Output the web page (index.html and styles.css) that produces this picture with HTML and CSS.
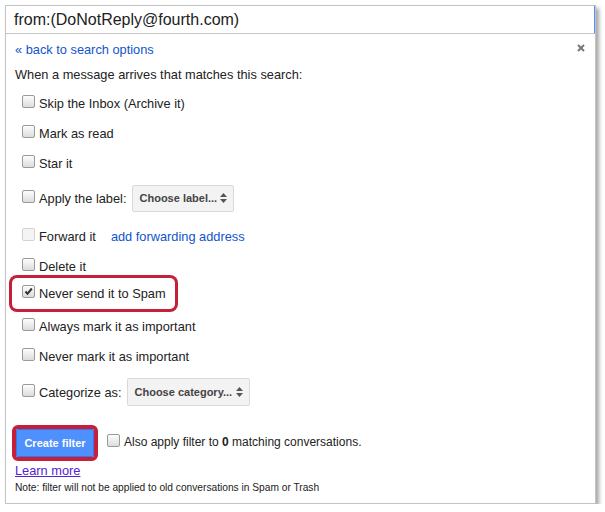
FILE: index.html
```html
<!DOCTYPE html>
<html lang="en">

<head>
  <meta charset="UTF-8">
  <meta name="viewport" content="width=device-width, initial-scale=1.0">
  <title>Create filter</title>
  <link rel="stylesheet" href="styles.css">
</head>

<body>
  <div class="filter">
    <div class="filter__search">from:(DoNotReply@fourth.com)</div>
    <div class="filter__body">
      <span class="filter__close">
        <svg width="8" height="8" viewBox="0 0 8 8"><path d="M1 1L7 7M7 1L1 7" stroke="#777" stroke-width="2"/></svg>
      </span>
      <a class="link filter__back" href="#">« back to search options</a>
      <p class="filter__intro">When a message arrives that matches this search:</p>
      <ul class="options">
        <li class="option"><span class="check"></span>Skip the Inbox (Archive it)</li>
        <li class="option"><span class="check"></span>Mark as read</li>
        <li class="option"><span class="check"></span>Star it</li>
        <li class="option option--select option--label">
          <span class="check"></span>Apply the label:
          <span class="picker picker--label">Choose label...
            <svg width="7" height="10" viewBox="0 0 7 10"><path d="M0 4L3.5 0L7 4ZM0 6L3.5 10L7 6Z" fill="#555"/></svg>
          </span>
        </li>
        <li class="option"><span class="check check--disabled"></span>Forward it<a class="link option__link" href="#">add forwarding address</a></li>
        <li class="option"><span class="check"></span>Delete it</li>
        <li class="option">
          <span class="flag"><span class="check check--on">
            <svg width="11" height="11" viewBox="0 0 11 11"><path d="M2.5 5.5L4.5 7.8L8.8 2.5" stroke="#333" stroke-width="2" fill="none"/></svg>
          </span>Never send it to Spam</span>
        </li>
        <li class="option"><span class="check"></span>Always mark it as important</li>
        <li class="option"><span class="check"></span>Never mark it as important</li>
        <li class="option option--select option--category">
          <span class="check"></span>Categorize as:
          <span class="picker picker--category">Choose category...
            <svg width="7" height="10" viewBox="0 0 7 10"><path d="M0 4L3.5 0L7 4ZM0 6L3.5 10L7 6Z" fill="#555"/></svg>
          </span>
        </li>
      </ul>
      <div class="actions">
        <span class="actions__ring"><button class="btn">Create filter</button></span>
        <span class="check"></span>
        <span class="actions__text">Also apply filter to <b>0</b> matching conversations.</span>
      </div>
      <a class="learn" href="#">Learn more</a>
      <p class="note">Note: filter will not be applied to old conversations in Spam or Trash</p>
    </div>
  </div>
</body>

</html>
```

FILE: styles.css
```css
html {
  font-size: 12.8px;
}

body {
  background-color: #fff;
  margin: 0;
}

* {
  font-family: "Liberation Sans", Arial, Helvetica, sans-serif;
}

.filter {
  background-color: #fff;
  border: 1px solid #c4c4c4;
  box-shadow: 3px 3px 4px rgba(0, 0, 0, .35);
  box-sizing: border-box;
  margin: 5px 0 0 5px;
  width: 591px;
}

.filter__search {
  border-bottom: 1px solid #c6c6c6;
  border-right: 1px solid #4d90fe;
  color: #222;
  font-size: 16px;
  height: 27px;
  line-height: 27px;
  padding-left: 8px;
}

.filter__body {
  color: #222;
  padding: 8px 10px 9px 9px;
  position: relative;
}

.filter__close {
  display: block;
  height: 8px;
  position: absolute;
  right: 10px;
  top: 10px;
  width: 8px;
}

.filter__close svg {
  display: block;
}

.link {
  color: #15c;
  text-decoration: none;
}

.filter__back {
  display: block;
  line-height: 16px;
}

.filter__intro {
  line-height: 16px;
  margin: 9px 0 0;
}

.options {
  list-style: none;
  margin: 5px 0 0;
  padding: 0;
}

.option {
  align-items: center;
  display: flex;
  height: 30px;
  padding-left: 7px;
}

.option--label {
  box-sizing: border-box;
  height: 43px;
  padding-bottom: 3px;
}

.option--category {
  height: 42px;
}

.option__link {
  margin-left: 15px;
}

.check {
  background: linear-gradient(#fdfdfd, #dcdcdc);
  border: 1px solid #9a9a9a;
  border-radius: 2px;
  box-sizing: border-box;
  display: inline-flex;
  flex: none;
  height: 13px;
  margin: 0 4px 4px 0;
  width: 13px;
}

.check--disabled {
  background: #f4f4f4;
  border-color: #d2d2d2;
}

.flag {
  align-items: center;
  border-radius: 5px;
  box-shadow: 0 0 0 3px #c51f3a;
  display: flex;
  height: 31px;
  margin: -6px 0 0 -10px;
  padding: 0 9px 0 10px;
}

.picker {
  align-items: center;
  background-color: #f3f3f3;
  border: 1px solid #d9d9d9;
  border-radius: 2px;
  box-sizing: border-box;
  color: #444;
  display: flex;
  font-size: 11px;
  font-weight: bold;
  justify-content: space-between;
  margin-left: 5px;
  padding: 0 6px 0 7px;
}

.picker--label {
  height: 27px;
  width: 102px;
}

.picker--category {
  height: 28px;
  width: 123px;
}

.actions {
  align-items: center;
  display: flex;
  margin: 12px 0 0 -3px;
}

.actions__ring {
  border: 4px solid #c51f3a;
  border-radius: 6px;
  display: flex;
  margin-right: 9px;
}

.btn {
  appearance: none;
  background-color: #4d90fe;
  border: 1px solid #3079ed;
  border-radius: 2px;
  color: #fff;
  font-size: 11px;
  font-weight: bold;
  height: 28px;
  padding: 0;
  width: 78px;
}

.actions .check {
  margin-bottom: 6px;
}

.actions__text {
  font-size: 12px;
  margin-bottom: 2px;
}

.learn {
  color: #5323d6;
  display: inline-block;
  line-height: 16px;
  margin-top: 2px;
}

.note {
  font-size: 10.2px;
  line-height: 12px;
  margin: 3px 0 0;
}
```
